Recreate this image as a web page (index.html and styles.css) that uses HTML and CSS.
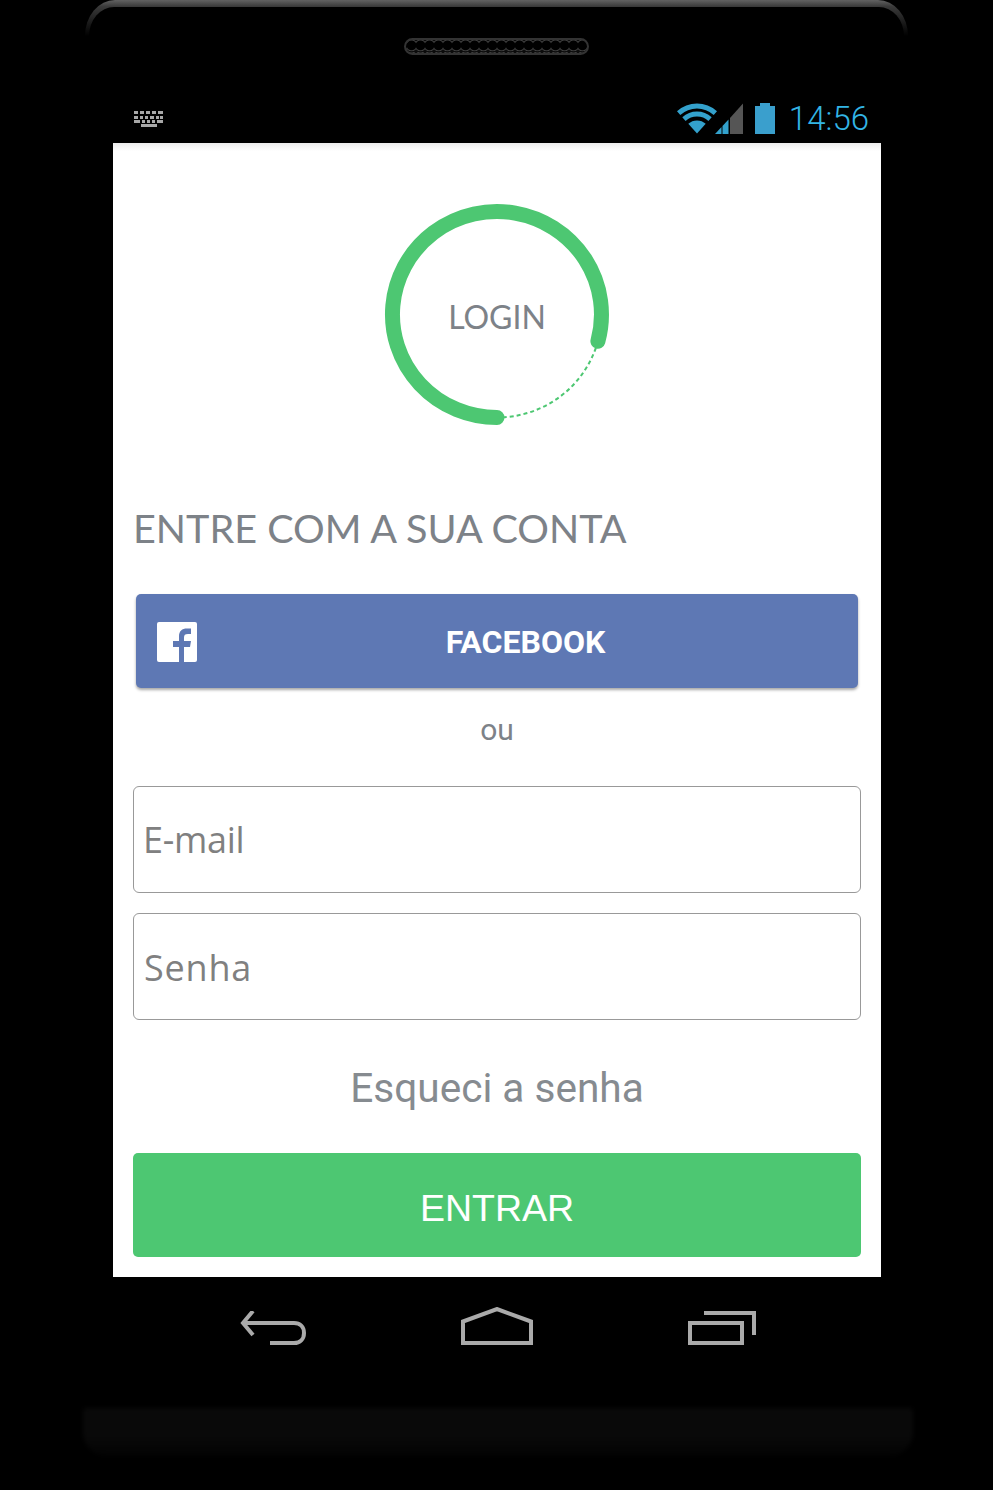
FILE: index.html
```html
<!DOCTYPE html>
<html lang="pt-BR">
<head>
    <meta charset="UTF-8">
    <meta name="viewport" content="width=device-width, initial-scale=1.0">
    <title>Login</title>
    <link rel="stylesheet" href="styles.css">
</head>
<body>
    <div class="phone">
        <div class="phone__edge">
            <div class="phone__edge-inner"></div>
        </div>
        <div class="phone__speaker"></div>

        <div class="status__bar">
            <svg class="status__keyboard" width="32" height="16" viewBox="0 0 32 16" fill="#a8a8a8">
                <rect x="0" y="0" width="4" height="3"/><rect x="6" y="0" width="4" height="3"/><rect x="12" y="0" width="4" height="3"/><rect x="18" y="0" width="4" height="3"/><rect x="24" y="0" width="5" height="3"/>
                <rect x="0" y="5" width="4" height="3"/><rect x="6" y="5" width="3" height="3"/><rect x="11" y="5" width="3" height="3"/><rect x="16" y="5" width="4" height="3"/><rect x="22" y="5" width="3" height="3"/><rect x="26" y="5" width="3" height="3"/>
                <rect x="0" y="9" width="6" height="3"/><rect x="8" y="9" width="3" height="3"/><rect x="13" y="9" width="3" height="3"/><rect x="18" y="9" width="3" height="3"/><rect x="23" y="9" width="6" height="3"/>
                <rect x="7" y="13" width="16" height="3"/>
            </svg>
            <div class="status__icons">
                <svg width="40" height="31" viewBox="0 0 40 31" fill="#33a1cc">
                    <path d="M0 8.2 A30 30 0 0 1 40 8.2 L36.7 11.9 A25 25 0 0 0 3.3 11.9 Z"/>
                    <path d="M5.3 14.2 A22 22 0 0 1 34.7 14.2 L31.4 17.9 A17 17 0 0 0 8.6 17.9 Z"/>
                    <path d="M11.3 20.8 A13 13 0 0 1 28.7 20.8 L20 30.5 Z"/>
                </svg>
                <svg class="status__signal" width="28" height="31" viewBox="0 0 28 31">
                    <path d="M0 31 L6.5 24 V31 Z" fill="#33a1cc"/>
                    <path d="M7.5 23 L13.5 16.5 V31 H7.5 Z" fill="#33a1cc"/>
                    <path d="M15 15 L28 0.5 V31 H15 Z" fill="#555"/>
                </svg>
                <svg class="status__battery" width="20" height="31" viewBox="0 0 20 31" fill="#3a9fcd">
                    <path d="M5 0 H15 V3 H20 V31 H0 V3 H5 Z"/>
                </svg>
                <span class="status__time">14:56</span>
            </div>
        </div>

        <main class="screen">
            <div class="login__badge">
                <svg width="240" height="240" viewBox="0 0 240 240" fill="none" stroke="#4dc772">
                    <path d="M220.9 146.2 A104.5 103 0 1 0 120 222.5" stroke-width="15" stroke-linecap="round"/>
                    <path d="M220.9 146.2 A104.5 103 0 0 1 120 222.5" stroke-width="2" stroke-dasharray="4 3"/>
                </svg>
                <span class="login__badge-text">LOGIN</span>
            </div>

            <h1 class="login__title">ENTRE COM A SUA CONTA</h1>

            <button type="button" class="facebook__btn">
                <svg class="facebook__icon" width="40" height="40" viewBox="0 0 40 40">
                    <rect width="40" height="40" rx="2" fill="#fff"/>
                    <path d="M22 40 V25 H16 V19 H22 V14.5 C22 9 25 6.5 30 6.5 H34 V12 H31 C28 12 27 13 27 15.5 V19 H34 L33 25 H27 V40 Z" fill="#5e78b4"/>
                </svg>
                <span class="facebook__label">FACEBOOK</span>
            </button>

            <p class="login__or">ou</p>

            <form class="login__form">
                <input class="login__input login__input--email" type="email" placeholder="E-mail">
                <input class="login__input login__input--senha" type="password" placeholder="Senha">
                <a class="login__forgot" href="#">Esqueci a senha</a>
                <button type="submit" class="main__btn">ENTRAR</button>
            </form>
        </main>

        <nav class="nav__bar">
            <svg width="66" height="34" viewBox="0 0 66 34" fill="none" stroke="#aaa" stroke-width="4">
                <path d="M13 0 L3 12 L13 24"/>
                <path d="M3 12 H54 C60 12 64 16 64 22 C64 28 60 32 54 32 H30"/>
            </svg>
            <svg width="72" height="38" viewBox="0 0 72 38" fill="none" stroke="#aaa" stroke-width="4">
                <path d="M2 36 V14.5 L36 2 L70 14.5 V36 Z"/>
            </svg>
            <svg width="68" height="35" viewBox="0 0 68 35" fill="none" stroke="#aaa" stroke-width="4">
                <rect x="2" y="13" width="52" height="20"/>
                <path d="M16 3 H66 V25"/>
            </svg>
        </nav>

        <div class="phone__chin"></div>
    </div>
</body>
</html>
```

FILE: styles.css
```css
html, body {
    margin: 0;
    background: #000;
}
.phone {
    position: relative;
    width: 993px;
    height: 1490px;
    background: #000;
    overflow: hidden;
}
.phone__edge {
    height: 36px;
    margin: 0 85px;
    border-radius: 30px 30px 0 0 / 36px 36px 0 0;
    background: linear-gradient(#626262, #3a3a3a 18%, #000 100%);
}
.phone__edge-inner {
    height: 29px;
    margin: 0 4px;
    position: relative;
    top: 7px;
    border-radius: 26px 26px 0 0 / 30px 30px 0 0;
    background: #000;
}

/* grille du haut-parleur */
.phone__speaker {
    box-sizing: border-box;
    width: 185px;
    height: 17px;
    margin: 2px auto 0;
    border: 2px solid #333;
    border-radius: 9px;
    background-color: #0c0c0c;
    background-image: radial-gradient(circle at 50% 45%, #000 55%, #444 68%, #0c0c0c 78%);
    background-size: 9px 12px;
    background-position: 1px 0;
}

.status__bar {
    display: flex;
    align-items: flex-end;
    justify-content: space-between;
    height: 80px;
    padding: 0 124px 0 134px;
    margin-top: 8px;
    box-sizing: border-box;
    padding-bottom: 9px;
}
.status__keyboard {
    margin-bottom: 7px;
}
.status__icons {
    display: flex;
    align-items: flex-end;
}
.status__signal {
    margin-left: -2px;
}
.status__battery {
    margin-left: 12px;
}
.status__time {
    margin-left: 14px;
    font-family: 'Roboto', sans-serif;
    font-weight: 300;
    font-size: 33px;
    line-height: 31px;
    color: #33b5e5;
}

.screen {
    box-sizing: border-box;
    width: 768px;
    height: 1134px;
    margin-left: 113px;
    padding: 52px 20px 20px;
    background: linear-gradient(#ececec, #fff 8px);
    text-align: center;
}
.login__badge {
    position: relative;
    width: 240px;
    height: 240px;
    margin: 0 auto;
}
.login__badge svg {
    display: block;
}
.login__badge-text {
    position: absolute;
    left: 0;
    right: 0;
    top: 102px;
    font-family: 'Lato', sans-serif;
    font-size: 32px;
    line-height: 40px;
    color: #7d8288;
}
.login__title {
    margin: 69px 0 0;
    text-align: left;
    font-family: 'Lato', sans-serif;
    font-weight: 400;
    font-size: 39.6px;
    line-height: 48px;
    color: #7d8288;
}

.facebook__btn {
    display: flex;
    align-items: center;
    width: 722px;
    height: 94px;
    margin: 42px auto 0;
    padding: 2px 4px 0 21px;
    border: none;
    border-radius: 5px;
    background: #5e78b4;
    box-shadow: 0 2px 3px rgba(0, 0, 0, 0.35);
}
.facebook__label {
    flex: 1;
    font-family: 'Roboto', sans-serif;
    font-weight: 700;
    font-size: 32px;
    color: #fff;
}
.login__or {
    margin: 25px 0 0;
    font-family: 'Roboto', sans-serif;
    font-size: 30px;
    line-height: 34px;
    color: #7d8288;
}

.login__form {
    display: flex;
    flex-direction: column;
    margin-top: 39px;
}
.login__input {
    box-sizing: border-box;
    width: 728px;
    height: 107px;
    margin-bottom: 20px;
    padding: 0 10px;
    border: 1px solid #999;
    border-radius: 6px;
    background: #fff;
    font-family: 'Open Sans', sans-serif;
    font-size: 36px;
    color: #808080;
}
.login__input::placeholder {
    color: #808080;
    opacity: 1;
}
.login__input--email {
    padding-left: 9px;
    letter-spacing: -0.3px;
}
.login__input--senha {
    padding-top: 2px;
    letter-spacing: 0.8px;
}
.login__forgot {
    margin-top: 20px;
    font-family: 'Roboto', sans-serif;
    font-size: 40.6px;
    line-height: 56px;
    color: #868b90;
    text-decoration: none;
}
.main__btn {
    height: 104px;
    margin-top: 37px;
    padding-top: 7px;
    border: none;
    border-radius: 5px;
    background: #4dc772;
    font-family: 'Liberation Sans', sans-serif;
    font-size: 37.5px;
    color: #fff;
}

.nav__bar {
    display: flex;
    align-items: flex-end;
    gap: 155px;
    height: 68px;
    padding-left: 240px;
}
.phone__chin {
    position: absolute;
    left: 83px;
    right: 80px;
    top: 1408px;
    height: 48px;
    border-radius: 4px 4px 24px 24px;
    background: linear-gradient(#090909 60%, #030303);
    filter: blur(2px);
}
```
